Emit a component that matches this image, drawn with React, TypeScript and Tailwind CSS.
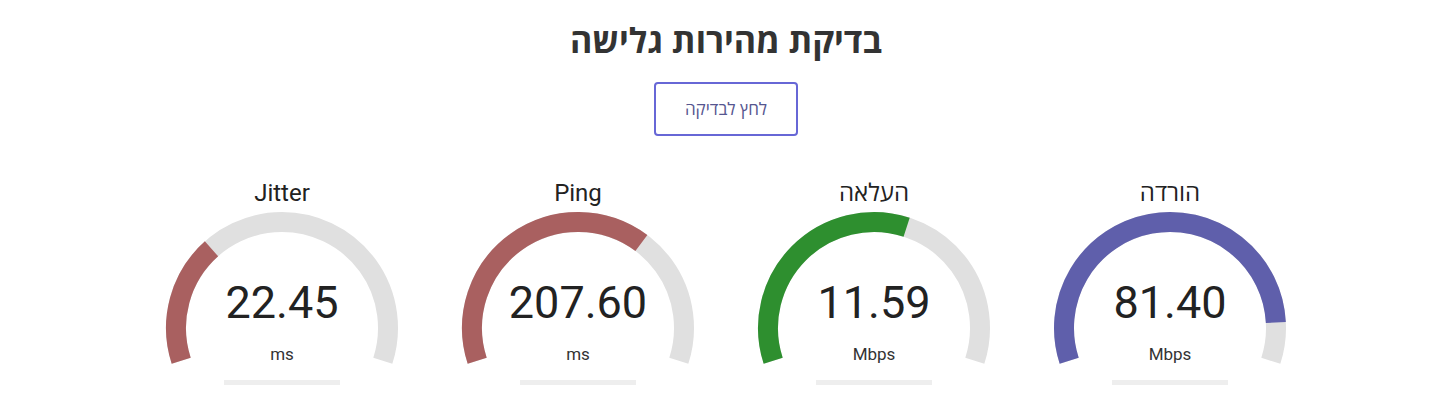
import React from 'react';

type Gauge = { label: string; value: string; unit: string; frac: number; color: string };

const gauges: Gauge[] = [
    { label: 'הורדה', value: '81.40', unit: 'Mbps', frac: 0.903, color: '#5f5fab' },
    { label: 'העלאה', value: '11.59', unit: 'Mbps', frac: 0.583, color: '#2e8f2f' },
    { label: 'Ping', value: '207.60', unit: 'ms', frac: 0.67, color: '#a96060' },
    { label: 'Jitter', value: '22.45', unit: 'ms', frac: 0.307, color: '#a96060' },
];

const CX = 120;
const CY = 119;
const R = 106;
const SPAN = 216;

function pt(deg: number) {
    const a = (deg * Math.PI) / 180;
    return [CX + R * Math.sin(a), CY - R * Math.cos(a)];
}

function arc(from: number, to: number) {
    const [x1, y1] = pt(from);
    const [x2, y2] = pt(to);
    const large = to - from > 180 ? 1 : 0;
    return `M ${x1.toFixed(2)} ${y1.toFixed(2)} A ${R} ${R} 0 ${large} 1 ${x2.toFixed(2)} ${y2.toFixed(2)}`;
}

function GaugeCard({ g }: { g: Gauge }) {
    const start = -SPAN / 2;
    const end = start + SPAN * g.frac;
    return (
        <div className="w-[296px] flex flex-col items-center">
            <div className="h-8 leading-8 text-[24px] text-[#222]" dir="auto">{g.label}</div>
            <div className="grid w-[240px]">
                <svg width="240" height="171" viewBox="0 0 240 171" className="[grid-area:1/1]">
                    <path d={arc(start, SPAN / 2)} fill="none" stroke="#e0e0e0" strokeWidth="20" />
                    <path d={arc(start, end)} fill="none" stroke={g.color} strokeWidth="20" />
                </svg>
                <div className="[grid-area:1/1] flex flex-col items-center pt-[68px]" dir="ltr">
                    <div className="h-[52px] leading-[52px] text-[45px] text-[#222]">{g.value}</div>
                    <div className="mt-[15px] h-5 leading-5 text-[17px] text-[#333]">{g.unit}</div>
                </div>
            </div>
            <div className="h-[5px] w-[116px] bg-[#eeeeee]" />
        </div>
    );
}

export default function App() {
    return (
        <div dir="rtl" className="w-[1439px] h-[406px] bg-white pl-[13px] pt-5 font-['Roboto','Open_Sans',sans-serif] overflow-hidden">
            <h1 className="h-10 leading-10 text-center text-[34px] font-bold text-[#333] font-['Open_Sans',sans-serif]">
                בדיקת מהירות גלישה
            </h1>
            <div className="flex justify-center mt-[22px]">
                <button className="w-[144px] h-[54px] border-2 border-[#6767d6] rounded-[4px] text-[17px] text-[#565690] bg-white font-['Open_Sans',sans-serif]">
                    לחץ לבדיקה
                </button>
            </div>
            <div className="flex justify-center mt-[41px]">
                {gauges.map((g) => (
                    <GaugeCard key={g.label} g={g} />
                ))}
            </div>
        </div>
    );
}
